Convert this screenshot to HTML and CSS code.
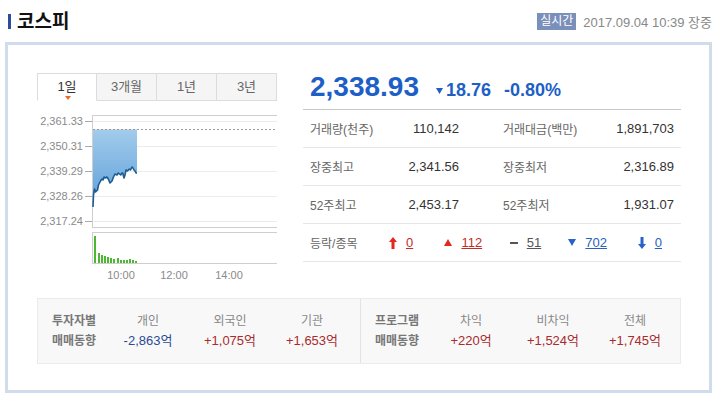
FILE: index.html
```html
<!DOCTYPE html>
<html lang="ko">
<head>
    <meta charset="UTF-8">
    <title>코스피</title>
    <link rel="stylesheet" href="styles.css">
</head>
<body>
    <div class="head">
        <h2 class="title">코스피</h2>
        <div class="stamp">
            <span class="badge">실시간</span>
            <span class="date">2017.09.04 10:39 장중</span>
        </div>
    </div>

    <div class="box">
        <div class="top">
            <div class="chart-col">
                <ul class="tabs">
                    <li class="tab on">1일</li>
                    <li class="tab">3개월</li>
                    <li class="tab">1년</li>
                    <li class="tab">3년</li>
                </ul>
                <svg class="chart" width="240" height="184" viewBox="0 0 240 184">
                    <defs>
                        <linearGradient id="fill" x1="0" y1="0" x2="0" y2="1">
                            <stop offset="0" stop-color="#a3cbec"/>
                            <stop offset="1" stop-color="#5a9fd8"/>
                        </linearGradient>
                    </defs>
                    <!-- price plot -->
                    <rect x="55.5" y="14.5" width="185" height="112" fill="#fff" stroke="#cfcfcf"/>
                    <g stroke="#ececec">
                        <line x1="56" y1="20.5" x2="240" y2="20.5"/>
                        <line x1="56" y1="45.5" x2="240" y2="45.5"/>
                        <line x1="56" y1="70.5" x2="240" y2="70.5"/>
                        <line x1="56" y1="95.5" x2="240" y2="95.5"/>
                        <line x1="56" y1="120.5" x2="240" y2="120.5"/>
                    </g>
                    <g stroke="#aaa">
                        <line x1="48" y1="20.5" x2="55" y2="20.5"/>
                        <line x1="48" y1="45.5" x2="55" y2="45.5"/>
                        <line x1="48" y1="70.5" x2="55" y2="70.5"/>
                        <line x1="48" y1="95.5" x2="55" y2="95.5"/>
                        <line x1="48" y1="120.5" x2="55" y2="120.5"/>
                    </g>
                    <g class="axis" text-anchor="end">
                        <text x="46" y="24">2,361.33</text>
                        <text x="46" y="49">2,350.31</text>
                        <text x="46" y="74">2,339.29</text>
                        <text x="46" y="99">2,328.26</text>
                        <text x="46" y="124">2,317.24</text>
                    </g>
                    <polygon fill="url(#fill)" points="56,28.5 56,106 56.5,94 57.5,88 58.5,91 60.5,89 61.5,84 62.5,82 63.5,80 65,78 66,79 67,76 68.5,77 70,76 71.3,78 73,82 74,81 75,80 76.5,76 78,73 80,74 81.3,72 82.5,73 83.7,74 85,72 85.7,72 87,77 88,74 89,69 90.5,70 92.3,68 93.5,69 95,66 96,67 97,69 98,70 99,72 100,72 100,28.5"/>
                    <line x1="56" y1="28.5" x2="240" y2="28.5" stroke="#9a9a9a" stroke-dasharray="2 2"/>
                    <polyline fill="none" stroke="#1d5c94" stroke-width="1.6" stroke-linejoin="round" points="56,106 56.5,94 57.5,88 58.5,91 60.5,89 61.5,84 62.5,82 63.5,80 65,78 66,79 67,76 68.5,77 70,76 71.3,78 73,82 74,81 75,80 76.5,76 78,73 80,74 81.3,72 82.5,73 83.7,74 85,72 85.7,72 87,77 88,74 89,69 90.5,70 92.3,68 93.5,69 95,66 96,67 97,69 98,70 99,72 100,72"/>

                    <!-- volume -->
                    <rect x="55.5" y="131.5" width="185" height="31" fill="#fff" stroke="#cfcfcf"/>
                    <g fill="#4cb82f">
                        <rect x="57" y="135" width="2" height="27"/>
                        <rect x="61" y="152" width="2" height="10"/>
                        <rect x="64" y="154" width="2" height="8"/>
                        <rect x="67" y="155" width="2" height="7"/>
                        <rect x="70" y="156" width="2" height="6"/>
                        <rect x="73" y="157" width="2" height="5"/>
                        <rect x="76" y="158" width="2" height="4"/>
                        <rect x="80" y="157" width="2" height="5"/>
                        <rect x="83" y="159" width="2" height="3"/>
                        <rect x="86" y="159" width="2" height="3"/>
                        <rect x="89" y="159" width="2" height="3"/>
                        <rect x="92" y="158" width="2" height="4"/>
                        <rect x="95" y="159" width="2" height="3"/>
                        <rect x="98" y="160" width="2" height="2"/>
                    </g>
                    <g class="axis" text-anchor="middle">
                        <text x="84" y="178">10:00</text>
                        <text x="137" y="178">12:00</text>
                        <text x="192" y="178">14:00</text>
                    </g>
                </svg>
            </div>

            <div class="info-col">
                <div class="price">
                    <strong class="now">2,338.93</strong>
                    <span class="chg">
                        <svg class="tri" width="7" height="6" viewBox="0 0 7 6"><polygon points="0,0 7,0 3.5,6" fill="#1d5fc6"/></svg>18.76
                    </span>
                    <span class="rate">-0.80%</span>
                </div>
                <div class="row">
                    <span class="label">거래량(천주)</span>
                    <span class="value">110,142</span>
                    <span class="label label2">거래대금(백만)</span>
                    <span class="value">1,891,703</span>
                </div>
                <div class="row">
                    <span class="label">장중최고</span>
                    <span class="value">2,341.56</span>
                    <span class="label label2">장중최저</span>
                    <span class="value">2,316.89</span>
                </div>
                <div class="row">
                    <span class="label">52주최고</span>
                    <span class="value">2,453.17</span>
                    <span class="label label2">52주최저</span>
                    <span class="value">1,931.07</span>
                </div>
                <div class="row row-count">
                    <span class="label">등락/종목</span>
                    <span class="item">
                        <svg width="8" height="12" viewBox="0 0 8 12"><polygon points="4,0 8,5 5.5,5 5.5,12 2.5,12 2.5,5 0,5" fill="#e2291d"/></svg>
                        <a class="cnt up" href="#">0</a>
                    </span>
                    <span class="item">
                        <svg width="8" height="7" viewBox="0 0 8 7"><polygon points="4,0 8,7 0,7" fill="#e2291d"/></svg>
                        <a class="cnt up" href="#">112</a>
                    </span>
                    <span class="item">
                        <svg width="8" height="7" viewBox="0 0 8 7"><rect x="0" y="3" width="8" height="2" fill="#555"/></svg>
                        <a class="cnt same" href="#">51</a>
                    </span>
                    <span class="item">
                        <svg width="8" height="7" viewBox="0 0 8 7"><polygon points="0,0 8,0 4,7" fill="#2a62c9"/></svg>
                        <a class="cnt down" href="#">702</a>
                    </span>
                    <span class="item">
                        <svg width="8" height="12" viewBox="0 0 8 12"><polygon points="2.5,0 5.5,0 5.5,7 8,7 4,12 0,7 2.5,7" fill="#2a62c9"/></svg>
                        <a class="cnt down" href="#">0</a>
                    </span>
                </div>
            </div>
        </div>

        <div class="trend">
            <div class="half">
                <div class="half-title">투자자별<br>매매동향</div>
                <div class="cell"><span class="cell-name">개인</span><span class="cell-val minus">-2,863억</span></div>
                <div class="cell"><span class="cell-name">외국인</span><span class="cell-val plus">+1,075억</span></div>
                <div class="cell"><span class="cell-name">기관</span><span class="cell-val plus">+1,653억</span></div>
            </div>
            <div class="half">
                <div class="half-title">프로그램<br>매매동향</div>
                <div class="cell"><span class="cell-name">차익</span><span class="cell-val plus">+220억</span></div>
                <div class="cell"><span class="cell-name">비차익</span><span class="cell-val plus">+1,524억</span></div>
                <div class="cell"><span class="cell-name">전체</span><span class="cell-val plus">+1,745억</span></div>
            </div>
        </div>
    </div>
</body>
</html>
```

FILE: styles.css
```css
body {
    margin: 0;
    font-family: "Liberation Sans", "Noto Sans CJK KR", sans-serif;
    color: #333;
    background: #fff;
}
.head {
    display: flex;
    justify-content: space-between;
    align-items: center;
    height: 42px;
    padding: 0 8px;
    box-sizing: border-box;
}
.title {
    margin: 0;
    font-size: 19px;
    font-weight: bold;
    color: #111;
    line-height: 15px;
    border-left: 3px solid #2b4d9c;
    padding-left: 6px;
}
.stamp {
    display: flex;
    align-items: center;
    gap: 7px;
}
.badge {
    background: #7a8fba;
    color: #fff;
    font-size: 12px;
    line-height: 17px;
    padding: 0 3px;
}
.date {
    font-size: 13px;
    color: #888;
}
.box {
    margin: 0 8px 0 5px;
    border: 3px solid #d0dcec;
    padding: 28px 28px 26px 29px;
}
.top {
    display: flex;
    gap: 26px;
    margin-bottom: 13px;
}
.chart-col {
    width: 240px;
}
.tabs {
    display: flex;
    list-style: none;
    margin: 0;
    padding: 0;
}
.tab {
    width: 60px;
    height: 28px;
    box-sizing: border-box;
    border: 1px solid #dcdcdc;
    border-left: 0;
    background: #f5f5f5;
    text-align: center;
    line-height: 26px;
    font-size: 13px;
    color: #666;
}
.tab:first-child {
    border-left: 1px solid #dcdcdc;
}
.tab.on {
    background: #fff;
    border-bottom-color: #fff;
    color: #333;
    position: relative;
}
.tab.on::after {
    content: "";
    position: absolute;
    left: 27px;
    bottom: 0;
    border-top: 4px solid #ec6a2e;
    border-left: 3px solid transparent;
    border-right: 3px solid transparent;
}
.chart {
    display: block;
}
.axis {
    font-family: "Liberation Sans", sans-serif;
    font-size: 11px;
    fill: #8a8a8a;
}
.info-col {
    flex: 1;
    min-width: 0;
}
.price {
    display: flex;
    align-items: baseline;
    height: 37px;
    box-sizing: border-box;
    border-bottom: 1px solid #c8c8c8;
    padding-left: 7px;
    color: #1d5fc6;
    font-weight: bold;
}
.now {
    font-size: 28px;
    line-height: 28px;
}
.chg {
    font-size: 18px;
    margin-left: 17px;
}
.tri {
    margin-right: 3px;
    vertical-align: 2px;
}
.rate {
    font-size: 18px;
    margin-left: 13px;
}
.row {
    display: grid;
    grid-template-columns: 80px 69px 1fr 90px;
    align-items: center;
    height: 38px;
    box-sizing: border-box;
    border-bottom: 1px solid #e6e6e6;
    padding: 0 7px;
    font-size: 13px;
}
.label {
    font-size: 12px;
    color: #666;
}
.label2 {
    padding-left: 44px;
}
.value {
    text-align: right;
    color: #333;
}
.row-count {
    grid-template-columns: 60px repeat(5, 1fr);
    padding-right: 0;
}
.item {
    display: flex;
    justify-content: center;
    align-items: center;
    gap: 9px;
}
.cnt {
    color: #333;
}
.cnt.up {
    color: #c0302a;
}
.cnt.same {
    color: #555;
}
.cnt.down {
    color: #2a5fc0;
}
.trend {
    display: flex;
    height: 66px;
    box-sizing: border-box;
    background: #f8f8f8;
    border: 1px solid #ebebeb;
}
.half {
    display: flex;
    align-items: center;
    padding-left: 14px;
}
.half:first-child {
    width: 322px;
    box-sizing: border-box;
}
.half + .half {
    flex: 1;
    border-left: 1px solid #e3e3e3;
}
.half-title {
    width: 55px;
    font-size: 12px;
    font-weight: bold;
    color: #777;
    line-height: 20px;
}
.cell {
    width: 82px;
    display: flex;
    flex-direction: column;
    align-items: center;
    line-height: 20px;
}
.cell-name {
    font-size: 12px;
    color: #888;
}
.cell-val {
    font-size: 13px;
}
.cell-val.minus {
    color: #2b4b95;
}
.cell-val.plus {
    color: #a82b2e;
}
```
